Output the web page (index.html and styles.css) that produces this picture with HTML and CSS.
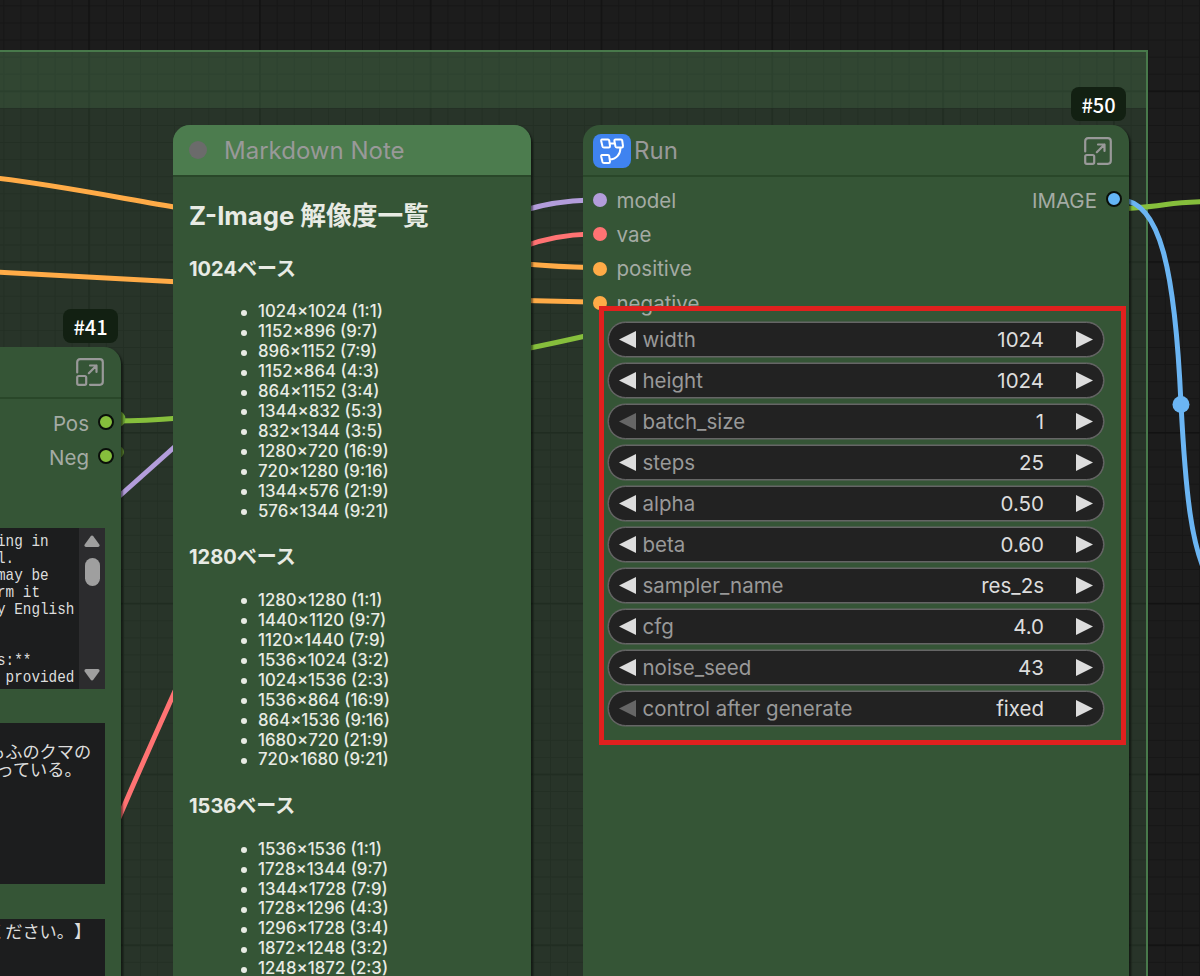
FILE: index.html
```
<!DOCTYPE html>
<html lang="ja">
<head>
<meta charset="utf-8">
<title>Workflow</title>
<link rel="stylesheet" href="styles.css">
</head>
<body>
<main class="canvas">
  <svg class="grid" width="1200" height="976">
    <defs>
      <pattern id="minor" width="17.08" height="17.08" patternUnits="userSpaceOnUse" patternTransform="translate(3.4 5.4)"><path d="M0 .5H17.08M.5 0V17.08" stroke="#161616" stroke-width="1" fill="none"/></pattern>
      <pattern id="major" width="170.8" height="170.8" patternUnits="userSpaceOnUse" patternTransform="translate(88.2 90.4)"><path d="M0 .8H170.8M.8 0V170.8" stroke="#121212" stroke-width="1.4" fill="none"/></pattern>
    </defs>
    <rect width="1200" height="976" fill="url(#minor)"/>
    <rect width="1200" height="976" fill="url(#major)"/>
  </svg>
  <section class="group"><div class="group-head"></div></section>
  <svg class="links" width="1200" height="976" fill="none" stroke-width="5">
    <g stroke="#ffab47">
      <path d="M-5 178C50 184 120 198 180 208"/>
      <path d="M-5 272L180 282"/>
      <path d="M525 264Q560 267 590 267.500"/>
      <path d="M525 300.500L590 302"/>
    </g>
    <path stroke="#b39ddb" d="M525 210Q555 201 590 200"/>
    <path stroke="#ff7373" d="M525 246Q555 235 590 234"/>
    <path stroke="#86bf3c" d="M525 349Q555 343 590 335"/>
    <path stroke="#86bf3c" d="M115 421Q145 421 180 418"/>
    <circle cx="117" cy="419" r="8.500" fill="#6da535"/>
    <circle cx="118" cy="452" r="6" fill="#5e8a2e"/>
    <path stroke="#b39ddb" d="M115 500L180 442"/>
    <path stroke="#ff7373" d="M115 827C130 792 147 753 180 680"/>
    <path stroke="#86bf3c" d="M1120 209Q1150 207 1166 204.500T1205 201.500"/>
    <path stroke="#6bb5f3" d="M1120 200C1160 200 1175 270 1181 404C1186 500 1192 544 1206 574"/>
    <circle cx="1181" cy="404.500" r="8.500" fill="#6bb5f3"/>
  </svg>

  <article class="node prompt">
    <span class="badge">#41</span>
    <header class="node-head">
      <svg class="expand" viewBox="0 0 28 28"><path d="M1.200 14.500V4.200Q1.200 1.200 4.200 1.200H23.800Q26.800 1.200 26.800 4.200V23.800Q26.800 26.800 23.800 26.800H14M12.800 15.200L20.500 7.500M14 7.500H20.500V14"/><rect x="1.200" y="18" width="9" height="8.800" rx="1.500"/></svg>
    </header>
    <ul class="outs">
      <li>Pos<i class="dot ring lime"></i></li>
      <li>Neg<i class="dot ring lime"></i></li>
    </ul>
    <div class="area scrolls">
      <pre class="mono">ing in
l.
may be
rm it
y English


s:**
 provided</pre>
      <div class="bar">
        <svg width="16" height="12" viewBox="0 0 16 12"><path d="M6.500 1.500Q8-.5 9.500 1.500L15.300 9.500Q16.200 11.700 14 12H2Q-.2 11.700.7 9.500Z"/></svg>
        <span class="thumb"></span>
        <svg class="down" width="16" height="12" viewBox="0 0 16 12"><path d="M6.500 10.500Q8 12.500 9.500 10.500L15.300 2.500Q16.200.3 14 0H2Q-.2.3.7 2.500Z"/></svg>
      </div>
    </div>
    <div class="area bear"><p>もふのクマの</p><p class="second">っている。</p></div>
    <div class="area last"><p>ください。】</p></div>
  </article>

  <article class="node note">
    <header class="node-head"><i class="collapse"></i><span class="title">Markdown Note</span></header>
    <div class="md">
      <h1>Z-Image 解像度一覧</h1>
      <h2>1024ベース</h2>
      <ul><li>1024×1024 (1:1)</li><li>1152×896 (9:7)</li><li>896×1152 (7:9)</li><li>1152×864 (4:3)</li><li>864×1152 (3:4)</li><li>1344×832 (5:3)</li><li>832×1344 (3:5)</li><li>1280×720 (16:9)</li><li>720×1280 (9:16)</li><li>1344×576 (21:9)</li><li>576×1344 (9:21)</li></ul>
      <h2>1280ベース</h2>
      <ul><li>1280×1280 (1:1)</li><li>1440×1120 (9:7)</li><li>1120×1440 (7:9)</li><li>1536×1024 (3:2)</li><li>1024×1536 (2:3)</li><li>1536×864 (16:9)</li><li>864×1536 (9:16)</li><li>1680×720 (21:9)</li><li>720×1680 (9:21)</li></ul>
      <h2>1536ベース</h2>
      <ul><li>1536×1536 (1:1)</li><li>1728×1344 (9:7)</li><li>1344×1728 (7:9)</li><li>1728×1296 (4:3)</li><li>1296×1728 (3:4)</li><li>1872×1248 (3:2)</li><li>1248×1872 (2:3)</li></ul>
    </div>
  </article>

  <article class="node run">
    <span class="badge">#50</span>
    <header class="node-head">
      <span class="logo"><svg width="24" height="26" viewBox="0 0 24 26"><path d="M2 1.500H8Q9 1.500 9.200 2.500L10 8Q10 9.500 8.800 9.500H4Q2.800 9.500 2.500 8.500L1.200 3Q1 1.500 2 1.500ZM15.500 1.500H21Q22 1.500 22.200 2.500L23 8Q23 9.500 21.800 9.500H17Q15.800 9.500 15.500 8.500L14.400 3Q14.300 1.500 15.500 1.500ZM2 17H8Q9 17 9.200 18L10 23.500Q10 25 8.800 25H4Q2.800 25 2.500 24L1.200 18.500Q1 17 2 17ZM9.500 5.500H14.800M20.500 9.500C20.500 16.500 16 21.500 9.700 21.500"/></svg></span>
      <span class="title">Run</span>
      <svg class="expand" viewBox="0 0 28 28"><path d="M1.200 14.500V4.200Q1.200 1.200 4.200 1.200H23.800Q26.800 1.200 26.800 4.200V23.800Q26.800 26.800 23.800 26.800H14M12.800 15.200L20.500 7.500M14 7.500H20.500V14"/><rect x="1.200" y="18" width="9" height="8.800" rx="1.500"/></svg>
    </header>
    <div class="slots">
      <ul class="ins">
        <li><i class="dot violet"></i>model</li>
        <li><i class="dot red"></i>vae</li>
        <li><i class="dot orange"></i>positive</li>
        <li><i class="dot orange"></i>negative</li>
      </ul>
      <ul class="outs"><li>IMAGE<i class="dot ring blue"></i></li></ul>
    </div>
    <div class="widgets">
      <div class="widget"><i class="prev"></i><span>width</span><b>1024</b><i class="next"></i></div>
      <div class="widget"><i class="prev"></i><span>height</span><b>1024</b><i class="next"></i></div>
      <div class="widget"><i class="prev off"></i><span>batch_size</span><b>1</b><i class="next"></i></div>
      <div class="widget"><i class="prev"></i><span>steps</span><b>25</b><i class="next"></i></div>
      <div class="widget"><i class="prev"></i><span>alpha</span><b>0.50</b><i class="next"></i></div>
      <div class="widget"><i class="prev"></i><span>beta</span><b>0.60</b><i class="next"></i></div>
      <div class="widget"><i class="prev"></i><span>sampler_name</span><b>res_2s</b><i class="next"></i></div>
      <div class="widget"><i class="prev"></i><span>cfg</span><b>4.0</b><i class="next"></i></div>
      <div class="widget"><i class="prev"></i><span>noise_seed</span><b>43</b><i class="next"></i></div>
      <div class="widget"><i class="prev off"></i><span>control after generate</span><b>fixed</b><i class="next"></i></div>
    </div>
  </article>
  <div class="highlight"></div>
</main>
</body>
</html>
```
FILE: styles.css
```
* { box-sizing: border-box; margin: 0; padding: 0; }
body { background: #1b1b1b; font-family: Inter, "Noto Sans CJK JP", sans-serif; }
ul { list-style: none; }
.canvas { position: relative; width: 1200px; height: 976px; overflow: hidden; background: #1c1c1c; }
.grid, .links { position: absolute; left: 0; top: 0; }

/* group frame */
.group { position: absolute; left: -10px; top: 50px; width: 1158px; height: 940px; background: rgba(76, 122, 80, .25); border: 2px solid #48794b; }
.group-head { height: 56px; background: rgba(76, 122, 80, .25); }

/* nodes */
.node { position: absolute; background: #355536; border-radius: 17px 17px 0 0; box-shadow: 2px 2px 2px rgba(0, 0, 0, .5); }
.node-head { display: flex; align-items: center; height: 52px; padding-top: 1px; border-bottom: 2px solid #294729; border-radius: 17px 17px 0 0; }
.title { font-size: 24px; line-height: 30px; color: #999; padding-top: 1px; }
.expand { width: 28px; height: 28px; margin-left: auto; fill: none; stroke: #999; stroke-width: 2.2; stroke-linejoin: round; stroke-linecap: round; }
.badge { position: absolute; right: 3px; top: -38px; width: 55px; height: 34px; border-radius: 8px; background: #122012; color: #fff; font: 500 20px/36px "Noto Sans CJK JP", sans-serif; text-align: center; }
.dot { flex: none; width: 14px; height: 14px; border-radius: 50%; }
.ring { width: 16px; height: 16px; border: 2px solid #0a0f0a; margin-right: -1px; position: relative; top: -1px; }
.lime { background: #86bf3c; }
.violet { background: #b39ddb; }
.red { background: #ff7373; }
.orange { background: #ffab47; }
.blue { background: #64b5f6; }
.ins li, .outs li { display: flex; align-items: center; height: 34.3px; font-size: 20.5px; color: #a4aba4; }
.ins li { gap: 10px; }
.outs li { gap: 9px; justify-content: flex-end; }

/* prompt node */
.prompt { left: -200px; top: 347px; width: 321px; height: 700px; }
.prompt .node-head { padding: 0 17px 0 0; }
.prompt .outs { padding: 7px 8px 0 0; height: 128.500px; }
.area { margin: 0 16px 0 0; padding-left: 188px; background: #1c1d1e; color: #ddd; overflow: hidden; text-spacing-trim: space-all; }
.scrolls { display: flex; height: 161px; }
.mono { flex: none; width: 91px; font: 17px/17px "Liberation Mono", monospace; transform: scaleX(.843); transform-origin: 0 0; padding: 5px 0 0; margin-left: 9px; margin-right: -9px; white-space: pre; }
.bar { flex: none; width: 26px; height: 161px; background: #2c2c2e; display: flex; flex-direction: column; align-items: center; padding: 7px 0 8px; fill: #9f9f9f; }
.thumb { width: 15px; height: 28px; margin-top: 11px; border-radius: 8px; background: #9f9f9f; }
.down { margin-top: auto; }
.area p { font: 17.2px/18px "Noto Sans CJK JP", sans-serif; white-space: nowrap; }
.bear { height: 161px; margin-top: 34.500px; padding-top: 19px; }
.second { padding-left: 8.600px; }
.last { height: 90px; margin-top: 34.500px; padding-top: 3px; }

/* note node */
.note { left: 173px; top: 124.500px; width: 358px; height: 900px; }
.note .node-head { background: #4c7c4e; gap: 17px; padding-left: 16px; }
.collapse { width: 18px; height: 18px; border-radius: 50%; background: #6b6b6b; }
.md { padding: 24px 16px; color: #e8ebe4; }
.md h1 { font-size: 25.700px; line-height: 30px; font-weight: 700; }
.md h2 { font-size: 20px; line-height: 24px; font-weight: 700; margin: 23.500px 0 21.700px; }
.md h1 + h2 { margin-top: 26px; }
.md ul { padding-left: 69px; }
.md li { position: relative; font-size: 16.800px; font-weight: 500; line-height: 19.950px; }
.md li::before { content: ""; position: absolute; left: -17.500px; top: 7.500px; width: 6px; height: 6px; border-radius: 50%; background: #e8ebe4; }

/* run node */
.run { left: 583px; top: 124.500px; width: 546px; height: 900px; }
.run .node-head { padding: 2px 17px 0 10px; }
.run .title { padding-top: 0; }
.logo { display: flex; align-items: center; justify-content: center; width: 38px; height: 34px; border-radius: 8px; background: #3f83f0; margin-right: 3px; }
.logo svg { fill: none; stroke: #fff; stroke-width: 2; }
.slots { display: flex; justify-content: space-between; height: 145.500px; padding: 6.500px 8px 0 9.500px; }
.widgets { display: grid; gap: 6px; padding: 0 25px; }
.widget { display: flex; align-items: center; height: 35px; border: 1px solid #666; box-shadow: 0 0 0 .5px #666; border-radius: 18px; background: #222; padding: 0 10px; font-size: 20.5px; color: #999; }
.widget b { margin-left: auto; font-weight: 400; color: #ddd; padding-right: 32px; }
.prev, .next { width: 17px; height: 17px; background: #ddd; }
.prev { clip-path: polygon(100% 0, 100% 100%, 0 50%); margin-right: 6.500px; }
.next { clip-path: polygon(0 0, 100% 50%, 0 100%); }
.off { background: #666; }

.highlight { position: absolute; left: 599px; top: 306px; width: 527px; height: 439px; border: 5px solid #e1201e; }
```
